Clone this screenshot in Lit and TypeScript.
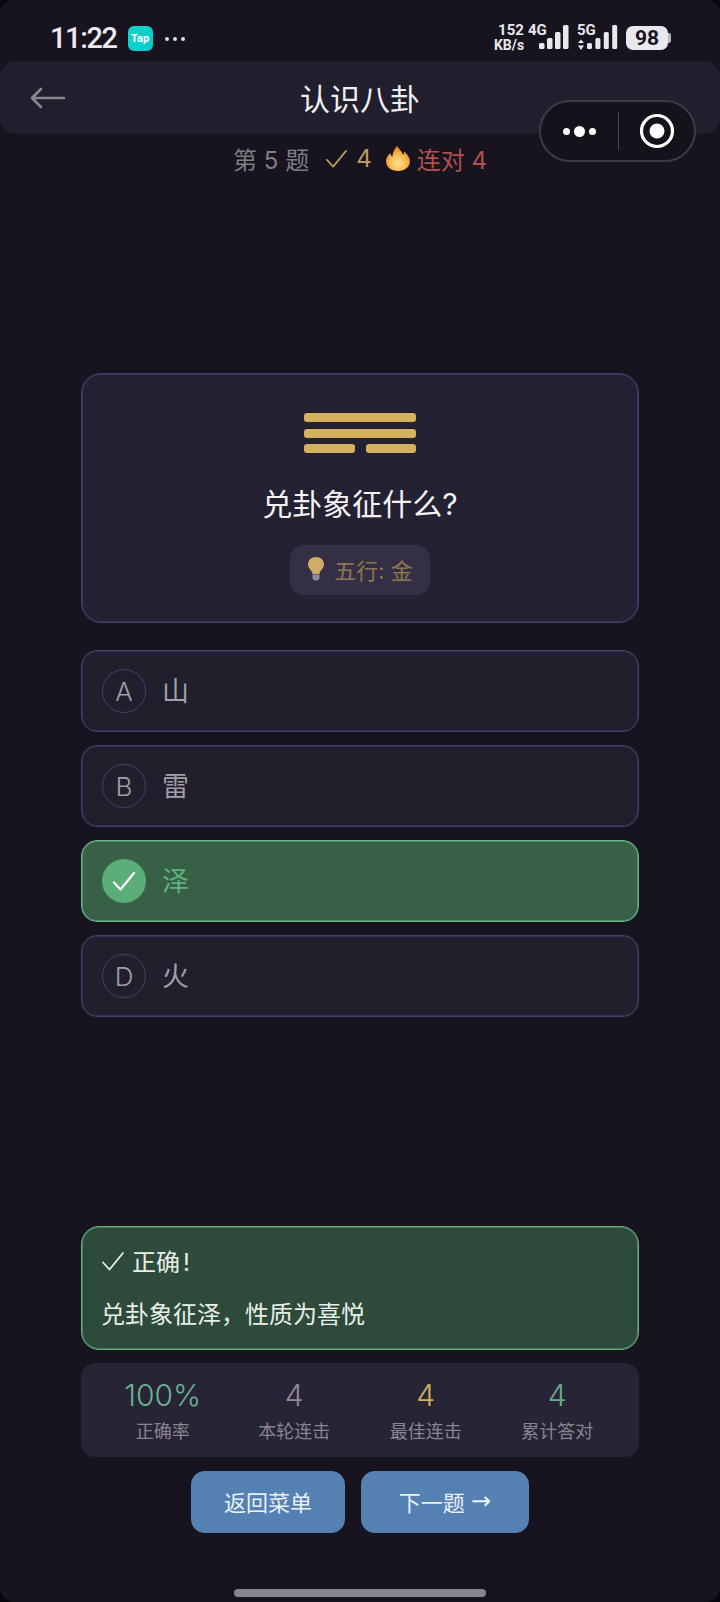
import { LitElement, html, css, svg } from "lit";
import { customElement } from "lit/decorators.js";

const check = (w: number, color: string, sw = 2) => html`<svg class="tick" width=${w} height=${w} viewBox="0 0 24 24" fill="none" stroke=${color} stroke-width=${sw} stroke-linecap="round" stroke-linejoin="round"><path d="M2 13.5 L8.5 20.5 L22 4"/></svg>`;

const bars = (hs: number[], x0: number, step: number, w: number) =>
  hs.map((h, i) => svg`<rect x=${x0 + i * step} y=${27 - h} width=${w} height=${h} rx="1.5" fill="#e9e8ec"/>`);

@customElement("app-root")
export class AppRoot extends LitElement {
  static styles = css`
    :host { display: block; background: #08070c; font-family: Inter, "Noto Sans CJK SC", sans-serif; }
    * { box-sizing: border-box; }
    .screen { position: relative; height: 1602px; display: flex; flex-direction: column; background: #17141f; overflow: hidden; border-radius: 14px; }

    .status { height: 61px; flex: none; display: flex; align-items: flex-start; padding: 22px 49px 0 50px; color: #eceaef; }
    .time { font: 500 29px/32px Roboto, sans-serif; letter-spacing: -1.4px; }
    .tap { width: 25px; height: 25px; margin: 4px 0 0 11px; border-radius: 6px; background: linear-gradient(135deg, #12d6c4, #05c8d2); color: #fff; font: 700 11px/25px Roboto, sans-serif; text-align: center; }
    .more { margin: 15px 0 0 12px; display: flex; gap: 4px; }
    .more i { width: 4px; height: 4px; border-radius: 50%; background: #dcdbe0; }
    .net { margin-left: auto; width: 34px; margin-right: 2px; display: flex; flex-direction: column; align-items: center; font-family: Roboto, sans-serif; color: #e9e8ec; }
    .net b { font-size: 15px; line-height: 16px; padding-left: 4px; font-weight: 700; }
    .net span { font-size: 14px; line-height: 15px; font-weight: 700; }
    .sig { display: block; margin-right: 8px; }
    .sig text { font: 700 15px Roboto, sans-serif; fill: #e9e8ec; }
    .batt { margin-top: 4px; width: 45px; height: 24px; display: flex; align-items: center; }
    .batt div { width: 42px; height: 24px; background: #e9e8ec; border-radius: 7px; color: #17141f; font: 700 21px/24px Roboto, sans-serif; text-align: center; }
    .batt i { width: 3px; height: 10px; background: #b9b8bd; border-radius: 0 2px 2px 0; }

    .nav { height: 73px; flex: none; background: #211e2d; border-radius: 16px; display: flex; align-items: center; justify-content: center; position: relative; color: #f1eff3; font-size: 30px; padding-bottom: 1px; }
    .back { position: absolute; left: 30px; top: 25px; }
    .capsule { position: absolute; left: 539px; top: 100px; width: 157px; height: 62px; border-radius: 31px; background: #14121b; border: 2px solid #3d3b47; display: flex; align-items: center; z-index: 2; }
    .capsule .dots { width: 77px; display: flex; justify-content: center; align-items: center; gap: 4px; }
    .capsule .dots i { width: 7px; height: 7px; border-radius: 50%; background: #fff; }
    .capsule .dots i.big { width: 11px; height: 11px; }
    .capsule .div { width: 1px; height: 38px; background: #4a4853; }
    .capsule .target { flex: 1; display: flex; justify-content: center; }

    .progress { height: 48px; flex: none; display: flex; align-items: center; justify-content: center; font-size: 24px; color: #807d86; white-space: pre; }
    .progress .g { color: #bb9c57; display: flex; align-items: center; margin-left: 16px; }
    .progress .g svg { margin-right: 8px; }
    .flame { margin: 0 7px 0 14px; }
    .progress .r { color: #b2504e; }

    .quiz { flex: 1; padding: 191px 81px 0; display: flex; flex-direction: column; }
    .card { height: 250px; background: #242133; border: 1px solid #443f6c; box-shadow: inset 0 0 0 1px #39345a; border-radius: 20px; display: flex; flex-direction: column; align-items: center; padding-top: 39px; }
    .tri { width: 112px; display: flex; flex-direction: column; gap: 6.5px; }
    .line { height: 9px; display: flex; gap: 11px; }
    .line i { flex: 1; background: #d4b05f; border-radius: 3px; }
    .q { margin-top: 29px; height: 44px; line-height: 44px; font-size: 30px; color: #f4f3f6; }
    .hint { margin-top: 19px; height: 50px; width: 140px; padding-bottom: 3px; border-radius: 14px; background: #342f44; display: flex; align-items: center; justify-content: center; gap: 9px; font-size: 22px; color: #8c7850; }

    .opts { margin-top: 27px; display: flex; flex-direction: column; gap: 13px; }
    .opt { height: 82px; background: #211f2c; border: 1px solid #433e6a; box-shadow: inset 0 0 0 1px #332f50; border-radius: 16px; display: flex; align-items: center; padding-left: 20px; font-size: 27px; color: #a09ea6; }
    .opt .badge { width: 44px; height: 44px; border-radius: 50%; border: 1.5px solid #443f6e; display: flex; align-items: center; justify-content: center; margin-right: 16px; color: #a09ea6; font-weight: 300; font-size: 26px; }
    .opt .txt { margin-bottom: 4px; }
    .opt.ok { background: #386046; border-color: #6cb585; box-shadow: inset 0 0 0 1px #4f8c66; color: #5fb27d; }
    .opt.ok .badge { background: #5cae78; border: none; }

    .foot { flex: none; padding: 0 81px; display: flex; flex-direction: column; }
    .fb { height: 124px; background: #2e4a3a; border: 1px solid #66b07f; box-shadow: inset 0 0 0 1px #467d5b; border-radius: 18px; padding: 15.5px 19px 0; color: #e8efe8; font-size: 24px; }
    .fb .t { display: flex; align-items: center; height: 36px; gap: 7px; }
    .fb .bang { margin-left: 3px; }
    .fb .d { margin-top: 18px; height: 36px; line-height: 36px; }
    .stats { margin-top: 13px; height: 94px; background: #272435; border-radius: 14px; display: flex; padding: 13px 16px 0; }
    .stat { flex: 1; display: flex; flex-direction: column; align-items: center; }
    .stat b { font-weight: 300; font-size: 30px; line-height: 38px; }
    .stat span { font-size: 18px; line-height: 26px; margin-top: 5px; color: #888590; }
    .btns { margin-top: 14px; display: flex; justify-content: center; gap: 16px; }
    .btn { height: 62px; padding: 0 33px 3px; border-radius: 14px; background: #5580b2; color: #eaf0f7; font-size: 22px; display: flex; align-items: center; justify-content: center; white-space: pre; }
    .btn.next { padding: 0 0 3px; width: 168px; }
    .btn .arrow { font-family: "DejaVu Sans", sans-serif; font-size: 24px; line-height: 1; }
    .homebar { align-self: center; width: 252px; height: 8px; margin: 56px 0 5px; border-radius: 4px; background: #88838f; }
  `;

  private options = [
    { k: "A", t: "山" },
    { k: "B", t: "雷" },
    { k: "C", t: "泽", ok: true },
    { k: "D", t: "火" },
  ];

  private stats = [
    { v: "100%", l: "正确率", c: "#6bb092" },
    { v: "4", l: "本轮连击", c: "#8c8992" },
    { v: "4", l: "最佳连击", c: "#cfae62" },
    { v: "4", l: "累计答对", c: "#66ab8a" },
  ];

  render() {
    return html`<div class="screen">
      <div class="status">
        <div class="time">11:22</div>
        <div class="tap">Tap</div>
        <div class="more"><i></i><i></i><i></i></div>
        <div class="net"><b>152</b><span>KB/s</span></div>
        <svg class="sig" width="41" height="28" viewBox="0 0 41 28"><text x="0" y="13">4G</text>${bars([6, 11, 17, 24], 11, 8, 5.5)}</svg>
        <svg class="sig" width="41" height="28" viewBox="0 0 41 28"><text x="0" y="13">5G</text><path d="M4 17.5 L7 21 H1 Z M4 28 L7 23.5 H1 Z" fill="#e9e8ec"/>${bars([6, 11, 17, 24], 10, 8.4, 5)}</svg>
        <div class="batt"><div>98</div><i></i></div>
      </div>

      <div class="nav">
        <svg class="back" width="36" height="24" viewBox="0 0 36 24" fill="none" stroke="#8a878f" stroke-width="2.6" stroke-linecap="round" stroke-linejoin="round"><path d="M34 12 H2 M11 3 L2 12 L11 21"/></svg>
        认识八卦
      </div>
      <div class="capsule">
        <div class="dots"><i></i><i class="big"></i><i></i></div>
        <div class="div"></div>
        <div class="target"><svg width="36" height="36" viewBox="0 0 36 36"><circle cx="18" cy="18" r="15.5" fill="none" stroke="#fff" stroke-width="3.2"/><circle cx="18" cy="18" r="7.5" fill="#fff"/></svg></div>
      </div>

      <div class="progress">
        <span>第 5 题</span>
        <span class="g">${check(23, "#bb9c57", 1.8)}4</span>
        <svg class="flame" width="24" height="25" viewBox="0 0 24 25">
          <defs><radialGradient id="fl" cx="50%" cy="68%" r="60%"><stop offset="0" stop-color="#fde08a"/><stop offset="0.55" stop-color="#f8bc55"/><stop offset="1" stop-color="#e9822a"/></radialGradient></defs>
          <path d="M11 0 C13 3 16 5 17 9 C18 8 18 6.5 18 5.5 C21.5 8.5 24 11.5 24 15.5 C24 21 18.5 25 12 25 C5.5 25 0 21 0 15.5 C0 11.5 2.5 9 4.5 7 C4.5 8.5 5 10 6.5 10.5 C6.5 6.5 8.5 3 11 0 Z" fill="url(#fl)"/>
        </svg>
        <span class="r">连对 4</span>
      </div>

      <div class="quiz">
        <div class="card">
          <div class="tri">
            <div class="line"><i></i></div>
            <div class="line"><i></i></div>
            <div class="line"><i></i><i></i></div>
          </div>
          <div class="q">兑卦象征什么?</div>
          <div class="hint">
            <svg width="18" height="25" viewBox="0 0 18 25"><path d="M9 1 C4 1 1 4.5 1 8.5 C1 12.5 5 14 5.5 18 H12.5 C13 14 17 12.5 17 8.5 C17 4.5 14 1 9 1 Z" fill="#d0ad66"/><path d="M5.5 18.5 H12.5 V22 C12.5 23.5 11 24.5 9 24.5 C7 24.5 5.5 23.5 5.5 22 Z" fill="#8d8bb0"/></svg>
            <span>五行: 金</span>
          </div>
        </div>
        <div class="opts">
          ${this.options.map(o => html`<div class="opt ${o.ok ? "ok" : ""}">
            <div class="badge">${o.ok ? check(24, "#fff", 2.2) : o.k}</div><span class="txt">${o.t}</span>
          </div>`)}
        </div>
      </div>

      <div class="foot">
        <div class="fb">
          <div class="t">${check(24, "#e8efe8", 1.8)}<span>正确<span class="bang">!</span></span></div>
          <div class="d">兑卦象征泽，性质为喜悦</div>
        </div>
        <div class="stats">
          ${this.stats.map(s => html`<div class="stat"><b style="color:${s.c}">${s.v}</b><span>${s.l}</span></div>`)}
        </div>
        <div class="btns">
          <div class="btn">返回菜单</div>
          <div class="btn next">下一题 <span class="arrow">→</span></div>
        </div>
        <div class="homebar"></div>
      </div>
    </div>`;
  }
}
